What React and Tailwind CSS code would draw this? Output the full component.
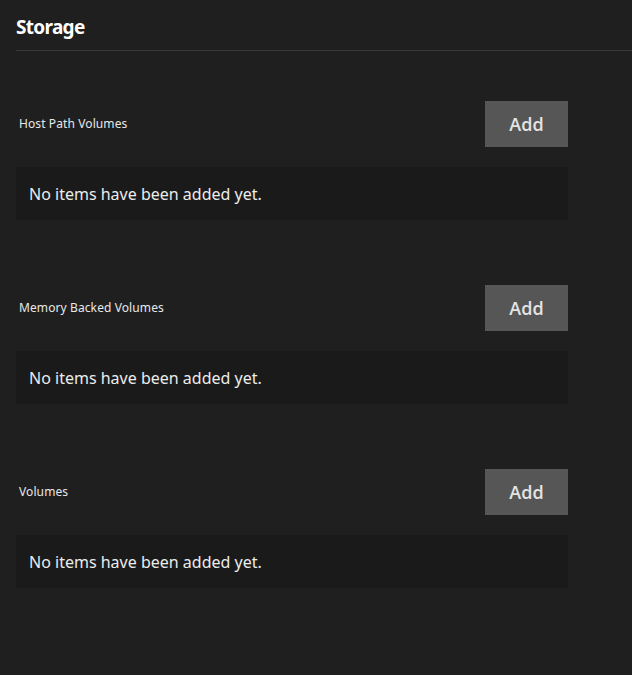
import React from 'react';

const sections = ['Host Path Volumes', 'Memory Backed Volumes', 'Volumes'];

const ListSection = ({ title }) => (
  <div className="w-[552px]">
    <div className="flex items-center justify-between h-[46px]">
      <span className="pl-[3px] text-[12px] text-[#e8e8e8] tracking-[0.1px]">{title}</span>
      <button className="w-[83px] h-[46px] bg-[#565656] text-[18px] font-semibold text-[#e4e4e4] font-['Open_Sans',sans-serif]">
        Add
      </button>
    </div>
    <div className="mt-[20px] h-[53px] bg-[#1a1a1a] flex items-center pl-[13px] text-[16px] text-[#ececec]">
      No items have been added yet.
    </div>
  </div>
);

const App = () => {
  return (
    <div className="min-h-[675px] bg-[#1f1f1f] font-['Noto_Sans',sans-serif] pl-[16px]">
      <div className="h-[51px] pt-[4px] flex items-center border-b border-[#383838]">
        <h2 className="text-[19px] font-bold text-white tracking-[-0.7px]">Storage</h2>
      </div>
      <div className="pt-[50px] flex flex-col gap-[65px]">
        {sections.map((s) => (
          <ListSection key={s} title={s} />
        ))}
      </div>
    </div>
  );
};

export default App;
